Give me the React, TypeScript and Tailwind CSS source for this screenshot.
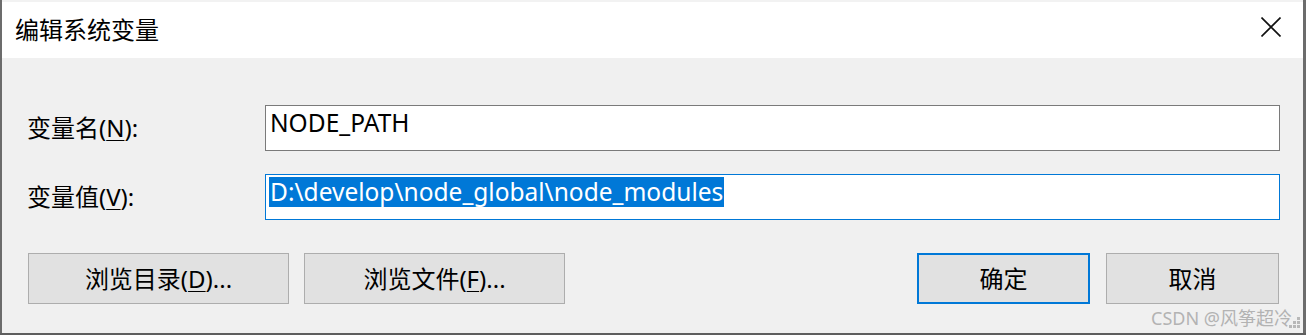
import React from 'react';

const font = { fontFamily: '"Noto Sans", "Noto Sans CJK SC", sans-serif' };

function Mnemonic({ children }: { children: React.ReactNode }) {
  return <span className="underline underline-offset-[3px] decoration-1">{children}</span>;
}

function CloseIcon() {
  return (
    <svg width="20" height="20" viewBox="0 0 20 20" className="block">
      <path d="M0.5 0.5 L19.5 19.5 M19.5 0.5 L0.5 19.5" stroke="#111" strokeWidth="1.6" fill="none" />
    </svg>
  );
}

function Grip() {
  const dots = [
    [8, 0],
    [4, 4], [8, 4],
    [0, 8], [4, 8], [8, 8],
  ];
  return (
    <svg width="11" height="11" viewBox="0 0 11 11" className="block">
      {dots.map(([x, y], i) => (
        <rect key={i} x={x} y={y} width="3" height="3" fill="#b8b8b8" />
      ))}
    </svg>
  );
}

export default function App() {
  return (
    <div className="w-[1306px] h-[335px] bg-[#6c6c6c] flex flex-col overflow-hidden text-[#000]" style={font}>
      {/* strip of the window behind */}
      <div className="h-[2px] ml-[2px] mr-[3px] bg-[#f2f2f2] shrink-0" />

      <div className="ml-[2px] w-[1301px] flex flex-col shrink-0">
        {/* title bar */}
        <div className="h-[56px] bg-white flex items-center justify-between pl-[13px] pr-[22px]">
          <span className="text-[24px] leading-none -mt-[1px]">编辑系统变量</span>
          <div className="-mt-[7px]">
            <CloseIcon />
          </div>
        </div>

        {/* body */}
        <div className="h-[275px] bg-[#f0f0f0] pt-[47px] pl-[25px] relative">
          <div className="flex items-center h-[46px]">
            <div className="w-[238px] text-[24px] leading-none">
              变量名(<Mnemonic>N</Mnemonic>):
            </div>
            <div className="w-[1015px] h-[46px] bg-white border border-[#7a7a7a] pl-[4px] pt-[2px] text-[24.5px] leading-[30px]">
              NODE_PATH
            </div>
          </div>

          <div className="flex items-center h-[46px] mt-[23px]">
            <div className="w-[238px] text-[24px] leading-none">
              变量值(<Mnemonic>V</Mnemonic>):
            </div>
            <div className="w-[1015px] h-[46px] bg-white border border-[#0078d7] pl-[3px] pt-[2px] text-[24.5px] leading-[30px]">
              <span className="bg-[#0078d7] text-white pl-[1px] pr-[1px] inline-block">D:\develop\node_global\node_modules</span>
            </div>
          </div>

          <div className="flex items-center mt-[33px] pl-[1px]">
            <button className="w-[261px] h-[51px] bg-[#e1e1e1] border border-[#adadad] text-[24px] leading-none">
              浏览目录(<Mnemonic>D</Mnemonic>)...
            </button>
            <button className="w-[261px] h-[51px] ml-[15px] bg-[#e1e1e1] border border-[#adadad] text-[24px] leading-none">
              浏览文件(<Mnemonic>F</Mnemonic>)...
            </button>
            <button className="w-[173px] h-[51px] ml-[352px] bg-[#e1e1e1] border-2 border-[#0078d7] text-[24px] leading-none">
              确定
            </button>
            <button className="w-[173px] h-[51px] ml-[16px] bg-[#e1e1e1] border border-[#adadad] text-[24px] leading-none">
              取消
            </button>
          </div>

          {/* watermark */}
          <div className="absolute right-[11px] bottom-[6px] text-[18px] leading-none text-[#b3b3b3] whitespace-nowrap">
            CSDN @风筝超冷
          </div>
          <div className="absolute right-[3px] bottom-[5px]">
            <Grip />
          </div>
        </div>
      </div>

      {/* strip of the window behind */}
      <div className="flex-1 bg-[#5e5e5e]" />
    </div>
  );
}
